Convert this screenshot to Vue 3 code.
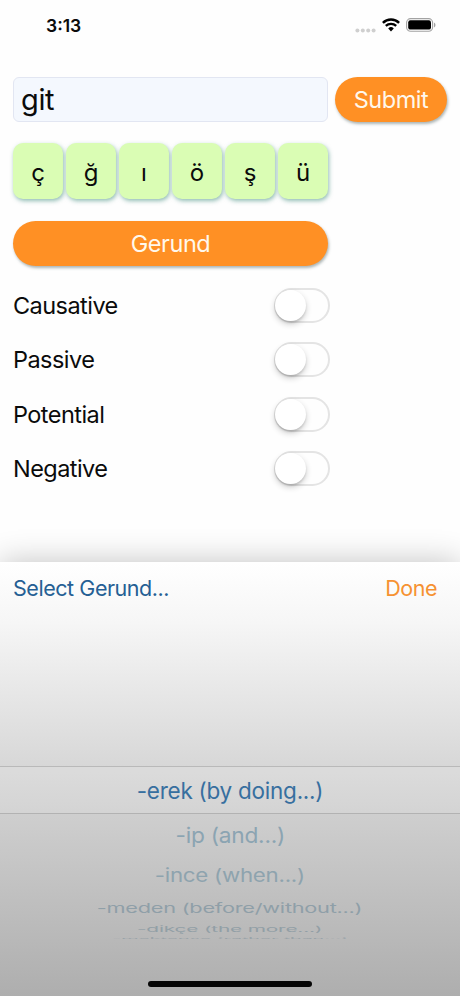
<template>
  <div class="screen">
    <header class="status-bar">
      <span class="time">3:13</span>
      <div class="status-icons">
        <svg class="signal" width="21" height="5" viewBox="0 0 21 5">
          <circle v-for="n in 4" :key="n" :cx="n * 5.4 - 3" cy="2.5" r="2" fill="#cfcfcf" />
        </svg>
        <svg class="wifi" width="18" height="14" viewBox="0 0 18 14">
          <path d="M0.9 4.8 A11.7 11.7 0 0 1 17.1 4.8" fill="none" stroke="#000" stroke-width="2.5" />
          <path d="M3.8 7.9 A7.5 7.5 0 0 1 14.2 7.9" fill="none" stroke="#000" stroke-width="2.3" />
          <path d="M6.2 10.4 A4 4 0 0 1 11.8 10.4 L9 13.4 Z" fill="#000" />
        </svg>
        <svg class="battery" width="30" height="14" viewBox="0 0 30 14">
          <rect x="0.6" y="0.6" width="26" height="12.6" rx="4" fill="none" stroke="#a3a3a3" stroke-width="1.1" />
          <rect x="2.2" y="2.2" width="22.8" height="9.4" rx="2.2" fill="#000" />
          <path d="M28 4.6 Q29.5 5.4 29.5 7 Q29.5 8.6 28 9.4 Z" fill="#a3a3a3" />
        </svg>
      </div>
    </header>

    <main class="form">
      <div class="search-row">
        <input v-model="verb" class="verb-input" type="text" spellcheck="false" />
        <button class="pill submit"><span>Submit</span></button>
      </div>

      <div class="keys">
        <button v-for="letter in letters" :key="letter" class="key" @click="verb += letter">
          {{ letter }}
        </button>
      </div>

      <button class="pill gerund"><span>Gerund</span></button>

      <div class="options">
        <div v-for="option in options" :key="option.name" class="option" @click="option.on = !option.on">
          <span class="option-name">{{ option.name }}</span>
          <span class="switch" :class="{ on: option.on }"><span class="knob"></span></span>
        </div>
      </div>
    </main>

    <section class="sheet">
      <div class="sheet-bar">
        <span class="sheet-title">Select Gerund...</span>
        <span class="done">Done</span>
      </div>
      <div class="wheel">
        <!-- rows flatten as they roll away from the selected one -->
        <div
          v-for="row in rows"
          :key="row.text"
          class="wheel-row"
          :class="{ selected: row.selected }"
          :style="{ height: row.height + 'px', color: row.color }"
        >
          <span class="wheel-text" :style="{ transform: `scale(${row.sx}, ${row.sy})` }">{{ row.text }}</span>
        </div>
      </div>
      <div class="home-indicator"></div>
    </section>
  </div>
</template>

<script setup>
import { ref } from 'vue'

const verb = ref('git')
const letters = ['ç', 'ğ', 'ı', 'ö', 'ş', 'ü']

const options = ref([
  { name: 'Causative', on: false },
  { name: 'Passive', on: false },
  { name: 'Potential', on: false },
  { name: 'Negative', on: false }
])

const rows = [
  { text: '-erek (by doing...)', height: 48, sx: 1, sy: 1, color: '#376f9f', selected: true },
  { text: '-ip (and...)', height: 42, sx: 1.01, sy: 0.94, color: '#8ba4b2' },
  { text: '-ince (when...)', height: 38, sx: 0.99, sy: 0.82, color: '#8ea3ae' },
  { text: '-meden (before/without...)', height: 26, sx: 0.965, sy: 0.6, color: '#8f9fa8' },
  { text: '-dikçe (the more...)', height: 16, sx: 0.93, sy: 0.36, color: '#929fa6' },
  { text: '-mektense (rather than...)', height: 4, sx: 0.885, sy: 0.08, color: '#9aa3a8' }
]
</script>

<style>
body {
  background: #fefefe;
}
</style>

<style scoped>
.screen {
  display: flex;
  flex-direction: column;
  width: 460px;
  height: 996px;
  overflow: hidden;
  background: #fefefe;
  font-family: Inter, "Liberation Sans", sans-serif;
  color: #0b0b0b;
}

.status-bar {
  display: flex;
  flex: none;
  justify-content: space-between;
  height: 77px;
  padding: 0 24px 0 46px;
  box-sizing: border-box;
}

.time {
  padding-top: 15px;
  font-size: 17.5px;
  line-height: 22px;
  font-weight: 600;
}

.status-icons {
  display: flex;
  align-items: flex-start;
  padding-top: 18px;
}

.signal {
  margin: 10px 6px 0 0;
}

.wifi {
  margin-right: 6px;
}

.form {
  flex: none;
  height: 485px;
  padding: 0 13px;
  box-sizing: border-box;
}

.search-row {
  display: flex;
  gap: 7px;
}

.verb-input {
  width: 315px;
  height: 45px;
  padding: 0 7px;
  box-sizing: border-box;
  border: 1px solid #e2e6f2;
  border-radius: 6px;
  outline: none;
  background: #f4f8fe;
  font-family: inherit;
  font-size: 29px;
  letter-spacing: -0.4px;
  color: #0b0b0b;
}

.pill {
  display: block;
  height: 45px;
  padding: 0;
  border: none;
  border-radius: 23px;
  background: #ff9024;
  box-shadow: 1px 2px 3px rgba(60, 80, 80, 0.42);
  font-family: inherit;
  font-size: 23.5px;
  letter-spacing: -0.45px;
  color: #fff8ec;
}

.submit {
  width: 112px;
}

.keys {
  display: flex;
  gap: 3px;
  margin-top: 21px;
}

.key {
  width: 50px;
  height: 56px;
  padding: 2px 0 0;
  border: none;
  border-radius: 10px;
  background: #dafdb4;
  box-shadow: 1px 2px 4px rgba(40, 125, 110, 0.5);
  font-family: inherit;
  font-size: 24px;
  color: #0b0b0b;
}

.gerund {
  width: 315px;
  margin-top: 22px;
}

.options {
  width: 317px;
  margin-top: 12.3px;
}

.option {
  display: flex;
  align-items: center;
  justify-content: space-between;
  height: 54.4px;
}

.option-name {
  font-size: 23.5px;
  letter-spacing: -0.55px;
}

.switch {
  width: 56px;
  height: 35px;
  padding: 2px;
  box-sizing: border-box;
  border: 2px solid #e4e4e4;
  border-radius: 18px;
  background: #fefefe;
}

.knob {
  display: block;
  width: 31px;
  height: 31px;
  margin: -2px 0 0 -3px;
  border-radius: 50%;
  background: #fff;
  box-shadow: 0 3px 6px rgba(0, 0, 0, 0.2), 0 2px 2px rgba(0, 0, 0, 0.1);
}

.switch.on {
  background: #ff9024;
}

.switch.on .knob {
  margin-left: 19px;
}

.sheet {
  display: flex;
  flex: 1;
  flex-direction: column;
  background: linear-gradient(#ffffff 0, #f6f6f6 60px, #d6d6d6 210px, #aeaeae 100%);
  box-shadow: 0 0 30px rgba(0, 0, 0, 0.24);
}

.sheet-bar {
  display: flex;
  flex: none;
  align-items: center;
  justify-content: space-between;
  height: 52px;
  padding: 0 23px 0 13px;
  font-size: 21.5px;
  letter-spacing: -0.45px;
}

.sheet-title {
  color: #255f94;
}

.done {
  color: #f69232;
}

.wheel {
  flex: 1;
  padding-top: 152px;
}

.wheel-row {
  display: flex;
  align-items: center;
  justify-content: center;
  box-sizing: border-box;
}

.wheel-row.selected {
  border-top: 1px solid #b9b9b9;
  border-bottom: 1px solid #b2b2b2;
  background: rgba(255, 255, 255, 0.12);
}

.wheel-text {
  padding-top: 1px;
  font-size: 22.5px;
  line-height: 26px;
  letter-spacing: -0.25px;
  white-space: nowrap;
}

.home-indicator {
  flex: none;
  width: 164px;
  height: 6px;
  margin: 0 auto 9px;
  border-radius: 3px;
  background: #060606;
}
</style>
